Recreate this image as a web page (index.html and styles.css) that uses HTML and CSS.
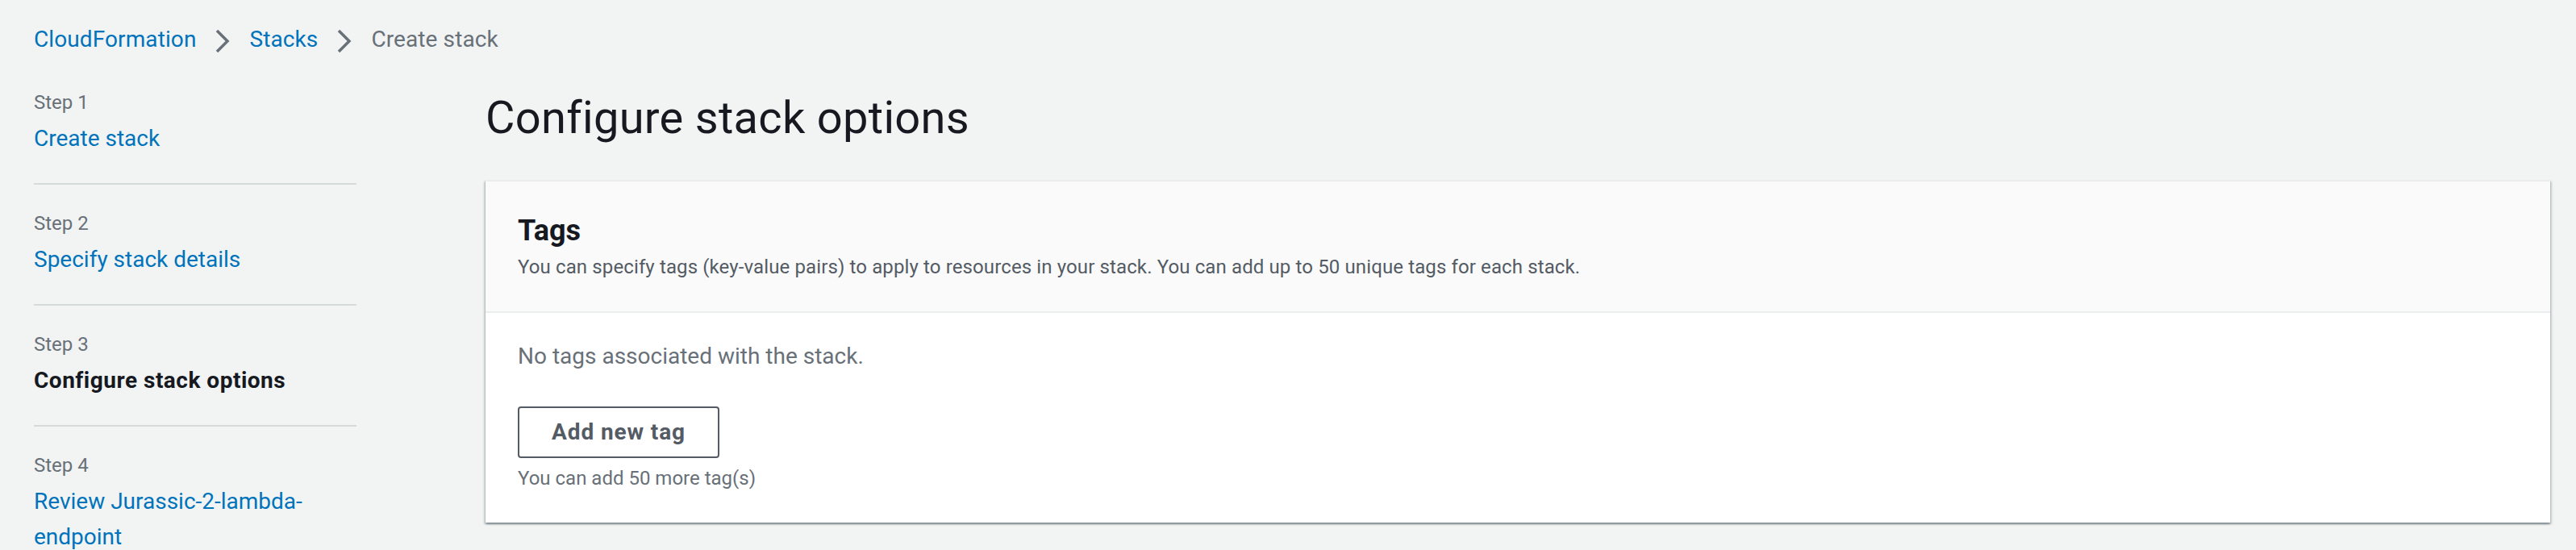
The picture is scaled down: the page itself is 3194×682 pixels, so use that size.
FILE: index.html
```html
<!DOCTYPE html>
<html lang="en">
<head>
<meta charset="utf-8">
<title>Configure stack options</title>
<link rel="stylesheet" href="styles.css">
</head>
<body>
<div class="page">
  <nav class="breadcrumbs">
    <a class="crumb" href="#">CloudFormation</a>
    <svg class="chev" viewBox="0 0 18 30" width="18" height="30"><polyline points="2,2 15,15 2,28" fill="none" stroke="#687078" stroke-width="3.5"/></svg>
    <a class="crumb" href="#">Stacks</a>
    <svg class="chev" viewBox="0 0 18 30" width="18" height="30"><polyline points="2,2 15,15 2,28" fill="none" stroke="#687078" stroke-width="3.5"/></svg>
    <span class="crumb current">Create stack</span>
  </nav>
  <div class="layout">
    <ul class="steps">
      <li class="step">
        <div class="step-label">Step 1</div>
        <a class="step-link" href="#">Create stack</a>
      </li>
      <li class="step">
        <div class="step-label">Step 2</div>
        <a class="step-link" href="#">Specify stack details</a>
      </li>
      <li class="step">
        <div class="step-label">Step 3</div>
        <span class="step-link active">Configure stack options</span>
      </li>
      <li class="step">
        <div class="step-label">Step 4</div>
        <a class="step-link" href="#">Review Jurassic-2-lambda-endpoint</a>
      </li>
    </ul>
    <main class="main">
      <h1 class="title">Configure stack options</h1>
      <section class="card">
        <header class="card-header">
          <h2 class="card-title">Tags</h2>
          <p class="card-desc">You can specify tags (key-value pairs) to apply to resources in your stack. You can add up to 50 unique tags for each stack.</p>
        </header>
        <div class="card-body">
          <p class="empty">No tags associated with the stack.</p>
          <button class="btn">Add new tag</button>
          <p class="hint">You can add 50 more tag(s)</p>
        </div>
      </section>
    </main>
  </div>
</div>
</body>
</html>
```
FILE: styles.css
```css
* { box-sizing: border-box; }
html, body {
  margin: 0;
  padding: 0;
  background: #f2f3f3;
}
body {
  font-family: Roboto, "Liberation Sans", Arial, sans-serif;
  color: #16191f;
  width: 3194px;
  height: 682px;
  overflow: hidden;
}
.page {
  padding: 27px 32px 0 42px;
  height: 682px;
  overflow: hidden;
}
.breadcrumbs {
  display: flex;
  align-items: center;
  height: 44px;
  font-size: 28px;
  line-height: 44px;
  gap: 24px;
  letter-spacing: 0.1px;
}
.crumb {
  color: #0073bb;
  text-decoration: none;
}
.crumb.current {
  color: #687078;
}
.chev {
  display: block;
  margin-top: 4px;
}
.layout {
  display: flex;
  margin-top: 8px;
}
.steps {
  list-style: none;
  margin: 0 160px 0 0;
  padding: 0;
  width: 400px;
  flex: none;
}
.step {
  padding: 32px 0 33px;
  border-bottom: 2px solid #d5dbdb;
}
.step:last-child {
  border-bottom: none;
}
.step-label {
  font-size: 24px;
  line-height: 32px;
  color: #687078;
  margin-bottom: 7px;
}
.step-link {
  display: block;
  font-size: 28px;
  line-height: 44px;
  color: #0073bb;
  text-decoration: none;
  width: 380px;
}
.step-link.active {
  color: #16191f;
  font-weight: 700;
  letter-spacing: 0.5px;
}
.main {
  flex: 1;
  padding-top: 31px;
}
.title {
  margin: 0;
  font-size: 56px;
  line-height: 72px;
  font-weight: 400;
  color: #16191f;
  letter-spacing: 0.3px;
}
.card {
  margin-top: 41px;
  background: #fff;
  border-top: 2px solid #eaeded;
  box-shadow: 0 2px 2px 0 rgba(0, 28, 36, 0.3), 2px 2px 2px 0 rgba(0, 28, 36, 0.15), -2px 2px 2px 0 rgba(0, 28, 36, 0.15);
}
.card-header {
  background: #fafafa;
  border-bottom: 2px solid #eaeded;
  padding: 39px 40px 39px;
}
.card-title {
  margin: 0;
  font-size: 36px;
  line-height: 44px;
  font-weight: 700;
  color: #16191f;
}
.card-desc {
  margin: 7px 0 0;
  font-size: 24px;
  line-height: 32px;
  color: #545b64;
  letter-spacing: 0.12px;
}
.card-body {
  padding: 32px 40px 39px;
}
.empty {
  margin: 0;
  font-size: 28px;
  line-height: 44px;
  color: #687078;
}
.btn {
  display: block;
  margin-top: 40px;
  height: 64px;
  padding: 8px 40px;
  border: 2px solid #545b64;
  border-radius: 4px;
  background: #fff;
  font-family: inherit;
  font-size: 28px;
  line-height: 44px;
  font-weight: 700;
  letter-spacing: 0.9px;
  color: #545b64;
}
.hint {
  margin: 9px 0 0;
  font-size: 24px;
  line-height: 32px;
  color: #687078;
}
```
